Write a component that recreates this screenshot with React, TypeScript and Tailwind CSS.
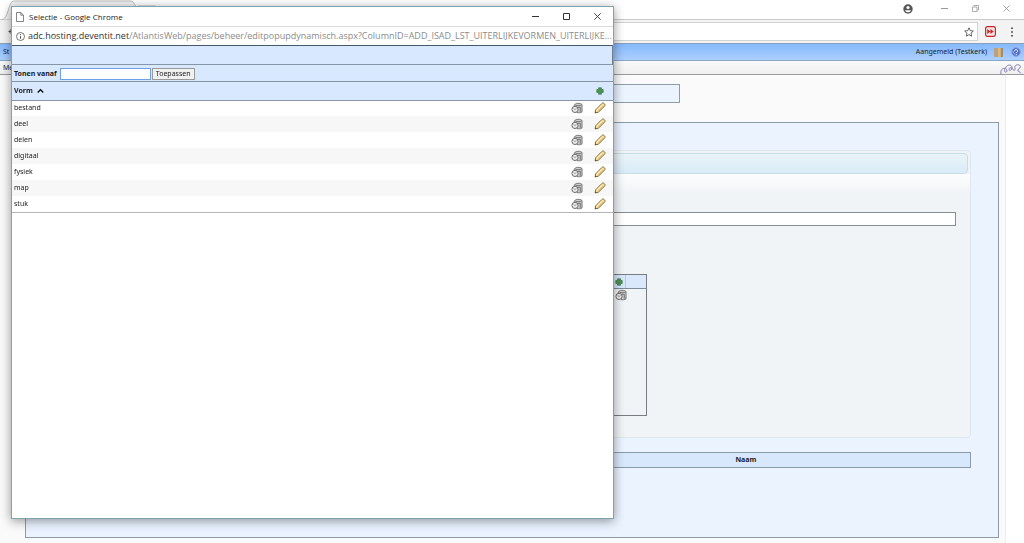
import { useState } from 'react';

const VORMEN = ['bestand', 'deel', 'delen', 'digitaal', 'fysiek', 'map', 'stuk'];

function PlusIcon() {
  return (
    <svg className="w-2 h-2" viewBox="0 0 8 8">
      <path d="M2.500 .8h3v1.700h1.700v3H5.500v1.700h-3V5.500H.8v-3h1.700z" fill="#4c9452" stroke="#3b7a48" strokeWidth=".7" strokeLinejoin="round" />
    </svg>
  );
}

function UsageIcon() {
  return (
    <svg className="w-3 h-3" viewBox="0 0 12 12" fill="none">
      <path d="M3.200 4.500C3 2 5 1.300 7 1.300s4 .5 4 1.400v7.300c-1.500 1-3.500.8-5 .6z" fill="#cccccc" stroke="#6c6c6c" strokeWidth=".9" />
      <path d="M4.500 3.200c2 .8 4.800.6 6.300-.3M7 5.300h2.300v4.500" stroke="#6c6c6c" strokeWidth=".9" />
      <circle cx="4" cy="7.400" r="3.100" fill="#ececec" stroke="#6c6c6c" />
      <path d="M2.500 6.300 4 7.600l1.500-1" stroke="#808080" strokeWidth=".8" />
    </svg>
  );
}

function PencilIcon() {
  return (
    <svg className="w-3 h-3" viewBox="0 0 12 12" fill="none">
      <path d="M1.100 10.900 1.600 7.800 7.600 1.700c1-1 1.700-1 2.700-.1s1 1.700.1 2.700l-6.100 6.100z" fill="#f3dc96" stroke="#7b6636" strokeWidth=".9" strokeLinejoin="round" />
      <path d="M2.900 8.300 8.600 2.500" stroke="#fff6d3" strokeWidth="1" />
      <path d="M4.200 9.300 9.900 3.500" stroke="#d0a24c" strokeWidth=".9" />
      <path d="M1 11l.3-1.800 1.500 1.500z" fill="#5e4d2c" />
    </svg>
  );
}

function BrowserChrome() {
  return (
    <>
      <div className="relative flex h-5 items-start justify-end border-b border-[#c9c9c9] bg-white">
        <svg className="absolute left-0 top-0 h-5 w-40" viewBox="0 0 160 20" fill="none">
          <path d="M2 20C6 18 7 14 10 5c1-3 2-4 5-4h115c3 0 4 2 5 4l5 15z" fill="#f2f2f2" stroke="#bdbdbd" />
          <path d="M138 6h16c2 0 2 0 4 5h-18z" fill="#dcdcdc" stroke="#bdbdbd" />
        </svg>
        <div className="flex h-[17px] items-center text-[#9a9a9a]">
          <svg className="mr-7 h-[10px] w-[10px]" viewBox="0 0 10 10">
            <circle cx="5" cy="5" r="4.700" fill="#555" />
            <circle cx="5" cy="3.500" r="1.600" fill="#fff" />
            <path d="M2 6.300h6C7.400 7.700 6.300 8.300 5 8.300S2.600 7.700 2 6.300z" fill="#fff" />
          </svg>
          <button aria-label="Minimaliseren" className="mr-6">
            <svg className="h-[7px] w-[7px]" viewBox="0 0 7 7"><path d="M0 3.500h7" stroke="currentColor" /></svg>
          </button>
          <button aria-label="Verkleinen" className="mr-6">
            <svg className="h-[7px] w-[7px]" viewBox="0 0 7 7" fill="none" stroke="currentColor" strokeWidth=".8">
              <path d="M.5 2h4.500v4.500H.5zM2 2V.5h4.500V5H5" />
            </svg>
          </button>
          <button aria-label="Sluiten" className="mr-[14px]">
            <svg className="h-[7px] w-[7px]" viewBox="0 0 7 7"><path d="M.5.5l6 6m0-6l-6 6" stroke="currentColor" strokeWidth=".9" /></svg>
          </button>
        </div>
      </div>
      <div className="flex h-[23px] items-center bg-[#f3f3f3] pr-[10px]">
        <svg className="ml-2 h-[9px] w-[9px]" viewBox="0 0 9 9" fill="none"><path d="M8.500 4.500H1M4.500 1 1 4.500 4.500 8" stroke="#555" /></svg>
        <div className="ml-16 flex h-[19px] flex-1 items-center justify-end border border-[#d2d2d2] bg-white pr-[3px]">
          <svg className="h-[10px] w-[10px]" viewBox="0 0 10 10" fill="none">
            <path d="M5 .8l1.250 2.900 3.100.3L7 6.100l.7 3.100L5 7.600 2.300 9.200 3 6.100.65 4l3.100-.3z" stroke="#555" strokeWidth=".9" />
          </svg>
        </div>
        <svg className="ml-[7px] mr-[14px] h-[11px] w-[11px]" viewBox="0 0 11 11" fill="none">
          <rect x=".6" y=".6" width="9.800" height="9.800" rx="1.800" fill="#fbe3e3" stroke="#c3282d" strokeWidth="1.200" />
          <path d="M2.200 3 5.400 5.500 2.200 8zM5.400 3 8.800 5.500 5.400 8z" fill="#c3282d" />
        </svg>
        <button aria-label="Menu">
          <svg className="h-[10px] w-[4px]" viewBox="0 0 4 10" fill="#555">
            <circle cx="2" cy="1.200" r="1" /><circle cx="2" cy="5" r="1" /><circle cx="2" cy="8.800" r="1" />
          </svg>
        </button>
      </div>
    </>
  );
}

function AppBars() {
  return (
    <>
      <div className="flex h-[18px] items-center border-b border-[#8ba6c6] border-t border-t-[#8aa0b8] bg-gradient-to-b from-[#86b8fc] to-[#acd0ff] px-[3px]">
        <a href="#start" className="flex-1">St</a>
        <span>Aangemeld (Testkerk)</span>
        <svg className="ml-[7px] h-[9px] w-[9px]" viewBox="0 0 9 9">
          <path d="M0 0h4v9H0z" fill="#b7a283" />
          <path d="M4 0h2.800v9H4z" fill="#dfb873" />
          <path d="M6.800 0H9v9H6.800z" fill="#a48c6c" />
        </svg>
        <svg className="ml-2 h-[10px] w-[10px]" viewBox="0 0 10 10" fill="none">
          <circle cx="5" cy="5" r="4.400" fill="#4f70cc" stroke="#8fa8e6" />
          <path d="M3.600 4.200c0-2.400 3.200-2 3 0C6.500 5.200 5.200 5 5.200 6.200M5.200 7v1.200" stroke="#fff" />
          <path d="M2 4c.1 1.500.6 2.500 1.600 3" stroke="#c3d0f5" strokeWidth=".8" />
        </svg>
      </div>
      <div className="flex h-[14px] items-end justify-between border-b border-[#9a9a9a] bg-gradient-to-b from-[#fafafa] to-[#efefef] pl-[3px]">
        <a href="#menu" className="pb-px">Me</a>
        <svg className="mr-[2px] h-[11px] w-[22px]" viewBox="0 0 22 11" fill="none">
          <path d="M1 11C0 7 3 4.500 5.500 5.500c2.500 1 1.500 4.500-.3 3.500C3.500 8 5.500 3 8.500 2.200c3-.7 4.500 2 3 4.300-1.200 1.700-3 .8-2.500-.8.500-1.300 3.300-1.200 3.800.5.500 1.500 2 1.500 2.200.2.200-1.200-.8-2.700.8-4 2-1.500 5-.4 4.500 1.800-.4 1.500-2.500 1.600-2.500 3 0 1.500 2.200 1.200 3 3.200" stroke="#8279b3" />
        </svg>
      </div>
    </>
  );
}

function DetailPage() {
  return (
    <div className="mr-[18px] border-r border-[#ececec] bg-[#fafafa] pb-[5px] pl-[25px] pr-[6px] pt-[9px]">
      <div className="h-[19px] w-[655px] border border-[#8f9dab] bg-[#ebf3ff]" />
      <div className="mt-[19px] border border-[#8c9baa] bg-[#eaf3ff] pb-[69px] pl-7 pr-[27px] pt-[27px]">
        <div className="h-[288px] rounded border border-[#dde7ec] bg-[#f1f4f7] pt-[2px]">
          <div className="mr-[2px] h-[21px] rounded border border-[#c9dde7] bg-gradient-to-b from-[#eaf3f8] to-[#d9ebf7]" />
          <div className="h-5 bg-gradient-to-b from-[#fcfdfe] to-[#f1f4f7]" />
          <input aria-label="Omschrijving" className="ml-4 mt-[18px] block h-[14px] w-[calc(100%-30px)] border border-[#888d92] bg-white px-1 outline-none" />
          <div className="ml-4 mt-12 h-[142px] w-[576px] border border-[#777d83]">
            <div className="flex h-[14px] items-center justify-end border-b border-[#7f8b97] bg-[#d9e8fb] pr-5">
              <button aria-label="Waarde toevoegen" className="flex h-[13px] w-[13px] items-center justify-center border-r border-[#a9cdf3]">
                <PlusIcon />
              </button>
            </div>
            <div className="flex justify-end pr-[19px]">
              <UsageIcon />
            </div>
          </div>
        </div>
        <table className="mt-[14px] w-full border border-[#8c9baa] bg-[#d8e8fc]">
          <thead>
            <tr className="h-[15px]">
              <th className="w-[51%] p-0" aria-label="Code" />
              <th className="p-0 text-center font-bold">Naam</th>
            </tr>
          </thead>
        </table>
      </div>
    </div>
  );
}

function SelectionPopup() {
  const [vanaf, setVanaf] = useState('');
  const [ascending, setAscending] = useState(true);
  const rows = ascending ? VORMEN : [...VORMEN].reverse();

  return (
    <div
      role="dialog"
      aria-label="Selectie"
      className="absolute left-[11px] top-[6px] h-[513px] w-[603px] border border-[#7fa3ad] bg-white shadow-[0_2px_10px_rgba(0,0,0,0.4)]"
    >
      <div className="flex h-5 items-center border-b border-[#dcdcdc] pl-1 pr-3 font-['Open_Sans',sans-serif] text-[8px] text-[#222]">
        <svg className="mr-[5px] h-[10px] w-2" viewBox="0 0 8 10" fill="#fff">
          <path d="M.5.5h4.300l2.700 2.700v6.300h-7zM4.800.5v2.700h2.700" stroke="#666" strokeWidth=".8" />
        </svg>
        <span className="flex-1">Selectie - Google Chrome</span>
        <button aria-label="Minimaliseren" className="mr-6">
          <svg className="h-[7px] w-[7px]" viewBox="0 0 7 7"><path d="M0 3.500h7" stroke="#333" /></svg>
        </button>
        <button aria-label="Maximaliseren" className="mr-6">
          <svg className="h-[7px] w-[7px]" viewBox="0 0 7 7"><path d="M.5.5h6v6h-6z" fill="none" stroke="#333" /></svg>
        </button>
        <button aria-label="Sluiten">
          <svg className="h-[7px] w-[7px]" viewBox="0 0 7 7"><path d="M.3.3l6.400 6.400m0-6.400L.3 6.700" stroke="#333" strokeWidth=".9" /></svg>
        </button>
      </div>

      <div className="flex h-[18px] items-center pl-1 font-['Open_Sans',sans-serif] text-[9px] whitespace-nowrap text-[#8c8c8c]">
        <svg className="mr-[3px] h-[9px] w-[9px] shrink-0" viewBox="0 0 9 9" fill="none" stroke="#555">
          <circle cx="4.500" cy="4.500" r="4" strokeWidth=".8" />
          <path d="M4.500 4v2.800M4.500 2.100v1" />
        </svg>
        <span><span className="text-[#333]">adc.hosting.deventit.net</span>/AtlantisWeb/pages/beheer/editpopupdynamisch.aspx?ColumnID=ADD_ISAD_LST_UITERLIJKEVORMEN_UITERLIJKE...</span>
      </div>

      <div className="h-5 border-t border-r border-b border-t-[#46586c] border-r-[#6c7d90] border-b-[#8796a7] bg-[#d8e8fe]" />

      <form onSubmit={(e) => e.preventDefault()} className="flex h-[17px] items-center border-b border-[#8796a7] bg-[#d8e8fe] pl-[2px] pt-px">
        <label htmlFor="vanaf" className="font-bold">Tonen vanaf</label>
        <input
          id="vanaf"
          autoFocus
          value={vanaf}
          onChange={(e) => setVanaf(e.target.value)}
          className="ml-[3px] h-3 w-[91px] border border-[#6f9fe8] bg-white px-px outline-none"
        />
        <button type="submit" className="ml-px h-3 w-[43px] border border-[#9a9a9a] bg-[#f1f1f1] text-center">
          Toepassen
        </button>
      </form>

      <table className="w-full border-collapse border-b border-[#b5b5b5]">
        <thead>
          <tr className="h-[18px] border-b border-[#8796a7] bg-[#d8e8fe]">
            <th className="p-0 pl-[2px] text-left font-bold">
              <button onClick={() => setAscending(!ascending)} className="flex items-center gap-1">
                Vorm
                <svg className={ascending ? 'h-[6px] w-[7px]' : 'h-[6px] w-[7px] rotate-180'} viewBox="0 0 7 6" fill="none">
                  <path d="M.7 4.500 3.500 1.700l2.800 2.800" stroke="#111" strokeWidth="1.400" />
                </svg>
              </button>
            </th>
            <th aria-label="Gebruik" className="w-5 p-0" />
            <th className="w-[27px] p-0">
              <button aria-label="Vorm toevoegen" className="mx-auto block w-2"><PlusIcon /></button>
            </th>
          </tr>
        </thead>
        <tbody>
          {rows.map((vorm) => (
            <tr key={vorm} className="h-4 even:bg-[#f7f7f7]">
              <td className="p-0 pl-[2px]">{vorm}</td>
              <td className="p-0">
                <button aria-label={`Gebruik van ${vorm}`} className="ml-[5px] block"><UsageIcon /></button>
              </td>
              <td className="p-0">
                <button aria-label={`${vorm} bewerken`} className="mx-auto block w-3"><PencilIcon /></button>
              </td>
            </tr>
          ))}
        </tbody>
      </table>
    </div>
  );
}

export default function App() {
  return (
    <div className="relative min-h-screen overflow-hidden bg-white font-['Noto_Sans',sans-serif] text-[7px] leading-[10px] text-[#1c1c1c]">
      <BrowserChrome />
      <AppBars />
      <DetailPage />
      <SelectionPopup />
    </div>
  );
}
